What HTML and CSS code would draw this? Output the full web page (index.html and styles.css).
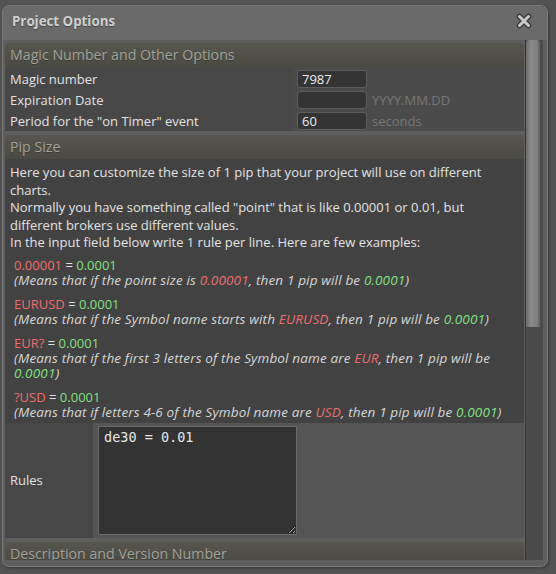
FILE: index.html
```html
<!DOCTYPE html>
<html lang="en">
<head>
<meta charset="utf-8">
<title>Project Options</title>
<link rel="stylesheet" href="styles.css">
</head>
<body>
<div class="dialog">
  <div class="titlebar">
    <span class="title">Project Options</span>
    <button class="close" type="button" aria-label="Close">
      <svg width="16" height="16" viewBox="0 0 16 16">
        <path d="M3.5 3.5L12.5 12.5M12.5 3.5L3.5 12.5" stroke="#3a3a3a" stroke-width="5.5" stroke-linecap="round"/>
        <path d="M3.5 3.5L12.5 12.5M12.5 3.5L3.5 12.5" stroke="#c9c9c9" stroke-width="3" stroke-linecap="round"/>
      </svg>
    </button>
  </div>
  <div class="body">
    <div class="scroll">
      <section class="group">
        <h2 class="group-head">Magic Number and Other Options</h2>
        <div class="fields">
          <div class="field">
            <label class="label">Magic number</label>
            <div class="value"><input class="input" value="7987"></div>
          </div>
          <div class="field">
            <label class="label">Expiration Date</label>
            <div class="value"><input class="input" value=""><span class="hint">YYYY.MM.DD</span></div>
          </div>
          <div class="field">
            <label class="label">Period for the "on Timer" event</label>
            <div class="value"><input class="input" value="60"><span class="hint">seconds</span></div>
          </div>
        </div>
      </section>

      <section class="group">
        <h2 class="group-head">Pip Size</h2>
        <div class="pip-text">
          <p class="intro">Here you can customize the size of 1 pip that your project will use on different<br>charts.<br>Normally you have something called "point" that is like 0.00001 or 0.01, but<br>different brokers use different values.<br>In the input field below write 1 rule per line. Here are few examples:</p>
          <div class="example">
            <div class="rule"><span class="red">0.00001</span> = <span class="green">0.0001</span></div>
            <div class="note">(Means that if the point size is <span class="red">0.00001</span>, then 1 pip will be <span class="green">0.0001</span>)</div>
          </div>
          <div class="example">
            <div class="rule"><span class="red">EURUSD</span> = <span class="green">0.0001</span></div>
            <div class="note">(Means that if the Symbol name starts with <span class="red">EURUSD</span>, then 1 pip will be <span class="green">0.0001</span>)</div>
          </div>
          <div class="example">
            <div class="rule"><span class="red">EUR?</span> = <span class="green">0.0001</span></div>
            <div class="note">(Means that if the first 3 letters of the Symbol name are <span class="red">EUR</span>, then 1 pip will be<br><span class="green">0.0001</span>)</div>
          </div>
          <div class="example">
            <div class="rule"><span class="red">?USD</span> = <span class="green">0.0001</span></div>
            <div class="note">(Means that if letters 4-6 of the Symbol name are <span class="red">USD</span>, then 1 pip will be <span class="green">0.0001</span>)</div>
          </div>
        </div>
        <div class="rules-row">
          <label class="rules-label">Rules</label>
          <div class="rules-cell"><textarea class="rules-input" spellcheck="false">de30 = 0.01</textarea></div>
        </div>
      </section>

      <section class="group">
        <h2 class="group-head">Description and Version Number</h2>
        <div class="fields">
          <div class="field">
            <label class="label">Version</label>
            <div class="value"><input class="input" value="1.0"></div>
          </div>
        </div>
      </section>
    </div>
    <div class="scrollbar"><div class="thumb"></div></div>
  </div>
</div>
</body>
</html>
```

FILE: styles.css
```css
* {
  box-sizing: border-box;
}

html,
body {
  margin: 0;
  height: 100%;
}

body {
  background: #535353;
  font-family: "Open Sans", "Noto Sans", sans-serif;
  font-size: 13px;
  color: #e2e2e2;
  overflow: hidden;
}

/* window frame */
.dialog {
  margin: 5px 0 0 2px;
  width: 546px;
  height: 562px;
  border: 1px solid #7a7a7a;
  border-radius: 7px;
  background: #5e5e5e;
  display: flex;
  flex-direction: column;
  overflow: hidden;
  box-shadow: 1px 1px 3px rgba(0, 0, 0, 0.35);
}

.titlebar {
  height: 34px;
  flex: none;
  display: flex;
  align-items: center;
  justify-content: space-between;
  padding: 0 15px 4px 9px;
  background: #6a6a6a;
}

.title {
  font-weight: 700;
  font-size: 13.3px;
  color: #d0d0d0;
  text-shadow: 0 1px 1px rgba(0, 0, 0, 0.35);
}

.close {
  width: 16px;
  height: 16px;
  padding: 0;
  border: 0;
  background: none;
  display: flex;
}

.body {
  flex: 1;
  display: flex;
  min-height: 0;
  padding: 0 4px 6px 2px;
  gap: 1px;
}

.scroll {
  width: 519px;
  flex: none;
  padding-top: 3px;
  overflow: hidden;
}

/* groups */
.group {
  margin-bottom: 4px;
}

.group-head {
  margin: 0;
  height: 24px;
  line-height: 24px;
  padding-left: 5px;
  font-size: 14.2px;
  font-weight: 400;
  color: #a2a29a;
  background: linear-gradient(#56564e, #4a4a43);
  border-radius: 4px 4px 0 0;
  text-shadow: 0 1px 0 rgba(0, 0, 0, 0.25);
}

.fields {
  padding-top: 1px;
  background: #4b4b4b;
}

.field {
  display: grid;
  grid-template-columns: 287px 1fr;
  height: 21px;
}

.label {
  display: flex;
  align-items: center;
  padding-left: 5px;
  background: #474747;
}

.value {
  display: flex;
  align-items: center;
  padding-left: 5px;
  background: #4b4b4b;
}

.input {
  width: 70px;
  height: 18px;
  padding: 0 4px;
  border: 1px solid #5c5c5c;
  border-radius: 3px;
  background: #343434;
  color: #ececec;
  font: inherit;
  outline: none;
}

.hint {
  margin-left: 5px;
  color: #767676;
}

/* pip size help */
.pip-text {
  background: #424242;
  padding: 5px 5px 3px;
}

.intro {
  margin: 0 0 6px;
  line-height: 17.5px;
  white-space: nowrap;
}

.example {
  padding-left: 4px;
  line-height: 15px;
  white-space: nowrap;
}

.example + .example {
  margin-top: 9px;
}

.note {
  font-style: italic;
  font-size: 13.5px;
  letter-spacing: 0.15px;
  color: #d6d6d6;
}

.red {
  color: #ee6c6c;
}

.green {
  color: #80e080;
}

/* rules editor */
.rules-row {
  display: flex;
  height: 115px;
}

.rules-label {
  width: 88px;
  flex: none;
  display: flex;
  align-items: center;
  padding-left: 5px;
  background: #474747;
}

.rules-cell {
  flex: 1;
  background: #555555;
  padding: 3px 0 0 5px;
}

.rules-input {
  display: block;
  width: 199px;
  height: 109px;
  margin: 0;
  padding: 2px 5px;
  border: 1px solid #6a6a6a;
  background: #333333;
  color: #e6e6e6;
  font-family: "DejaVu Sans Mono", monospace;
  font-size: 13.5px;
  line-height: 16px;
  resize: both;
  outline: none;
}

/* scrollbar */
.scrollbar {
  width: 18px;
  flex: none;
  display: flex;
  flex-direction: column;
  background: #4a4a4a;
  border-left: 1px solid #363636;
}

.thumb {
  width: 14px;
  height: 287px;
  border-radius: 3px 3px 0 0;
  background: linear-gradient(to right, #6a6a6a, #8a8a8a 35%, #7e7e7e 80%, #5e5e5e);
}
```
